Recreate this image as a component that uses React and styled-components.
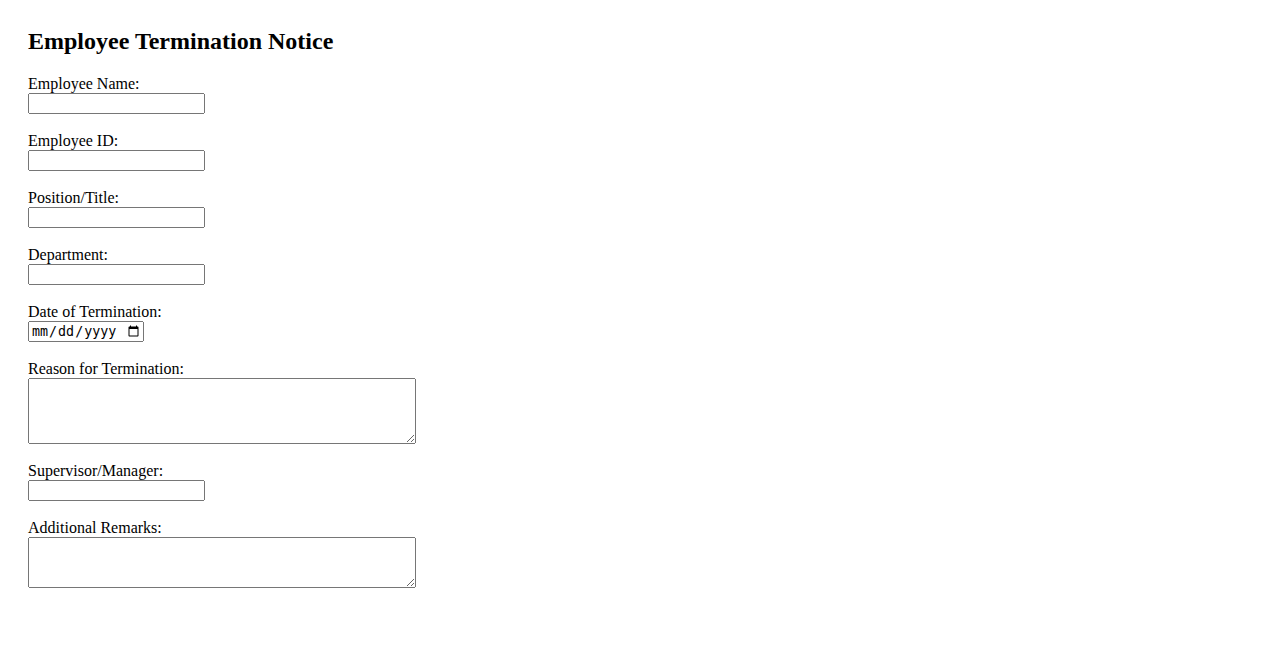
import React from 'react';
import styled, { createGlobalStyle } from 'styled-components';

const GlobalStyle = createGlobalStyle`
  body {
    margin: 0;
    background: #fff;
    color: #000;
    font-family: "Liberation Serif", "Times New Roman", serif;
  }
`;

const Page = styled.div`
  padding: 28px;
`;

const Title = styled.h2`
  margin: 0 0 20px;
  font-size: 24px;
  font-weight: bold;
  line-height: 27px;
`;

const Form = styled.form`
  display: flex;
  flex-direction: column;
  align-items: flex-start;
`;

const Field = styled.div`
  display: flex;
  flex-direction: column;
  align-items: flex-start;
  margin-bottom: 18px;
`;

const Label = styled.label`
  display: block;
  height: 18px;
  font-size: 16px;
  line-height: 18px;
`;

const Input = styled.input`
  box-sizing: border-box;
  width: ${props => (props.type === 'date' ? '116px' : '177px')};
  height: 21px;
  margin: 0;
`;

const TextArea = styled.textarea`
  box-sizing: border-box;
  width: 388px;
  height: ${props => props.rows * 15 + 6}px;
  margin: 0;
`;

const fields = [
  { id: 'name', label: 'Employee Name:' },
  { id: 'empId', label: 'Employee ID:' },
  { id: 'position', label: 'Position/Title:' },
  { id: 'department', label: 'Department:' },
  { id: 'date', label: 'Date of Termination:', type: 'date' },
  { id: 'reason', label: 'Reason for Termination:', rows: 4 },
  { id: 'supervisor', label: 'Supervisor/Manager:' },
  { id: 'remarks', label: 'Additional Remarks:', rows: 3 },
];

const App = () => (
  <Page>
    <GlobalStyle />
    <Title>Employee Termination Notice</Title>
    <Form>
      {fields.map(f => (
        <Field key={f.id}>
          <Label htmlFor={f.id}>{f.label}</Label>
          {f.rows
            ? <TextArea id={f.id} rows={f.rows} />
            : <Input id={f.id} type={f.type || 'text'} />}
        </Field>
      ))}
    </Form>
  </Page>
);

export default App;
